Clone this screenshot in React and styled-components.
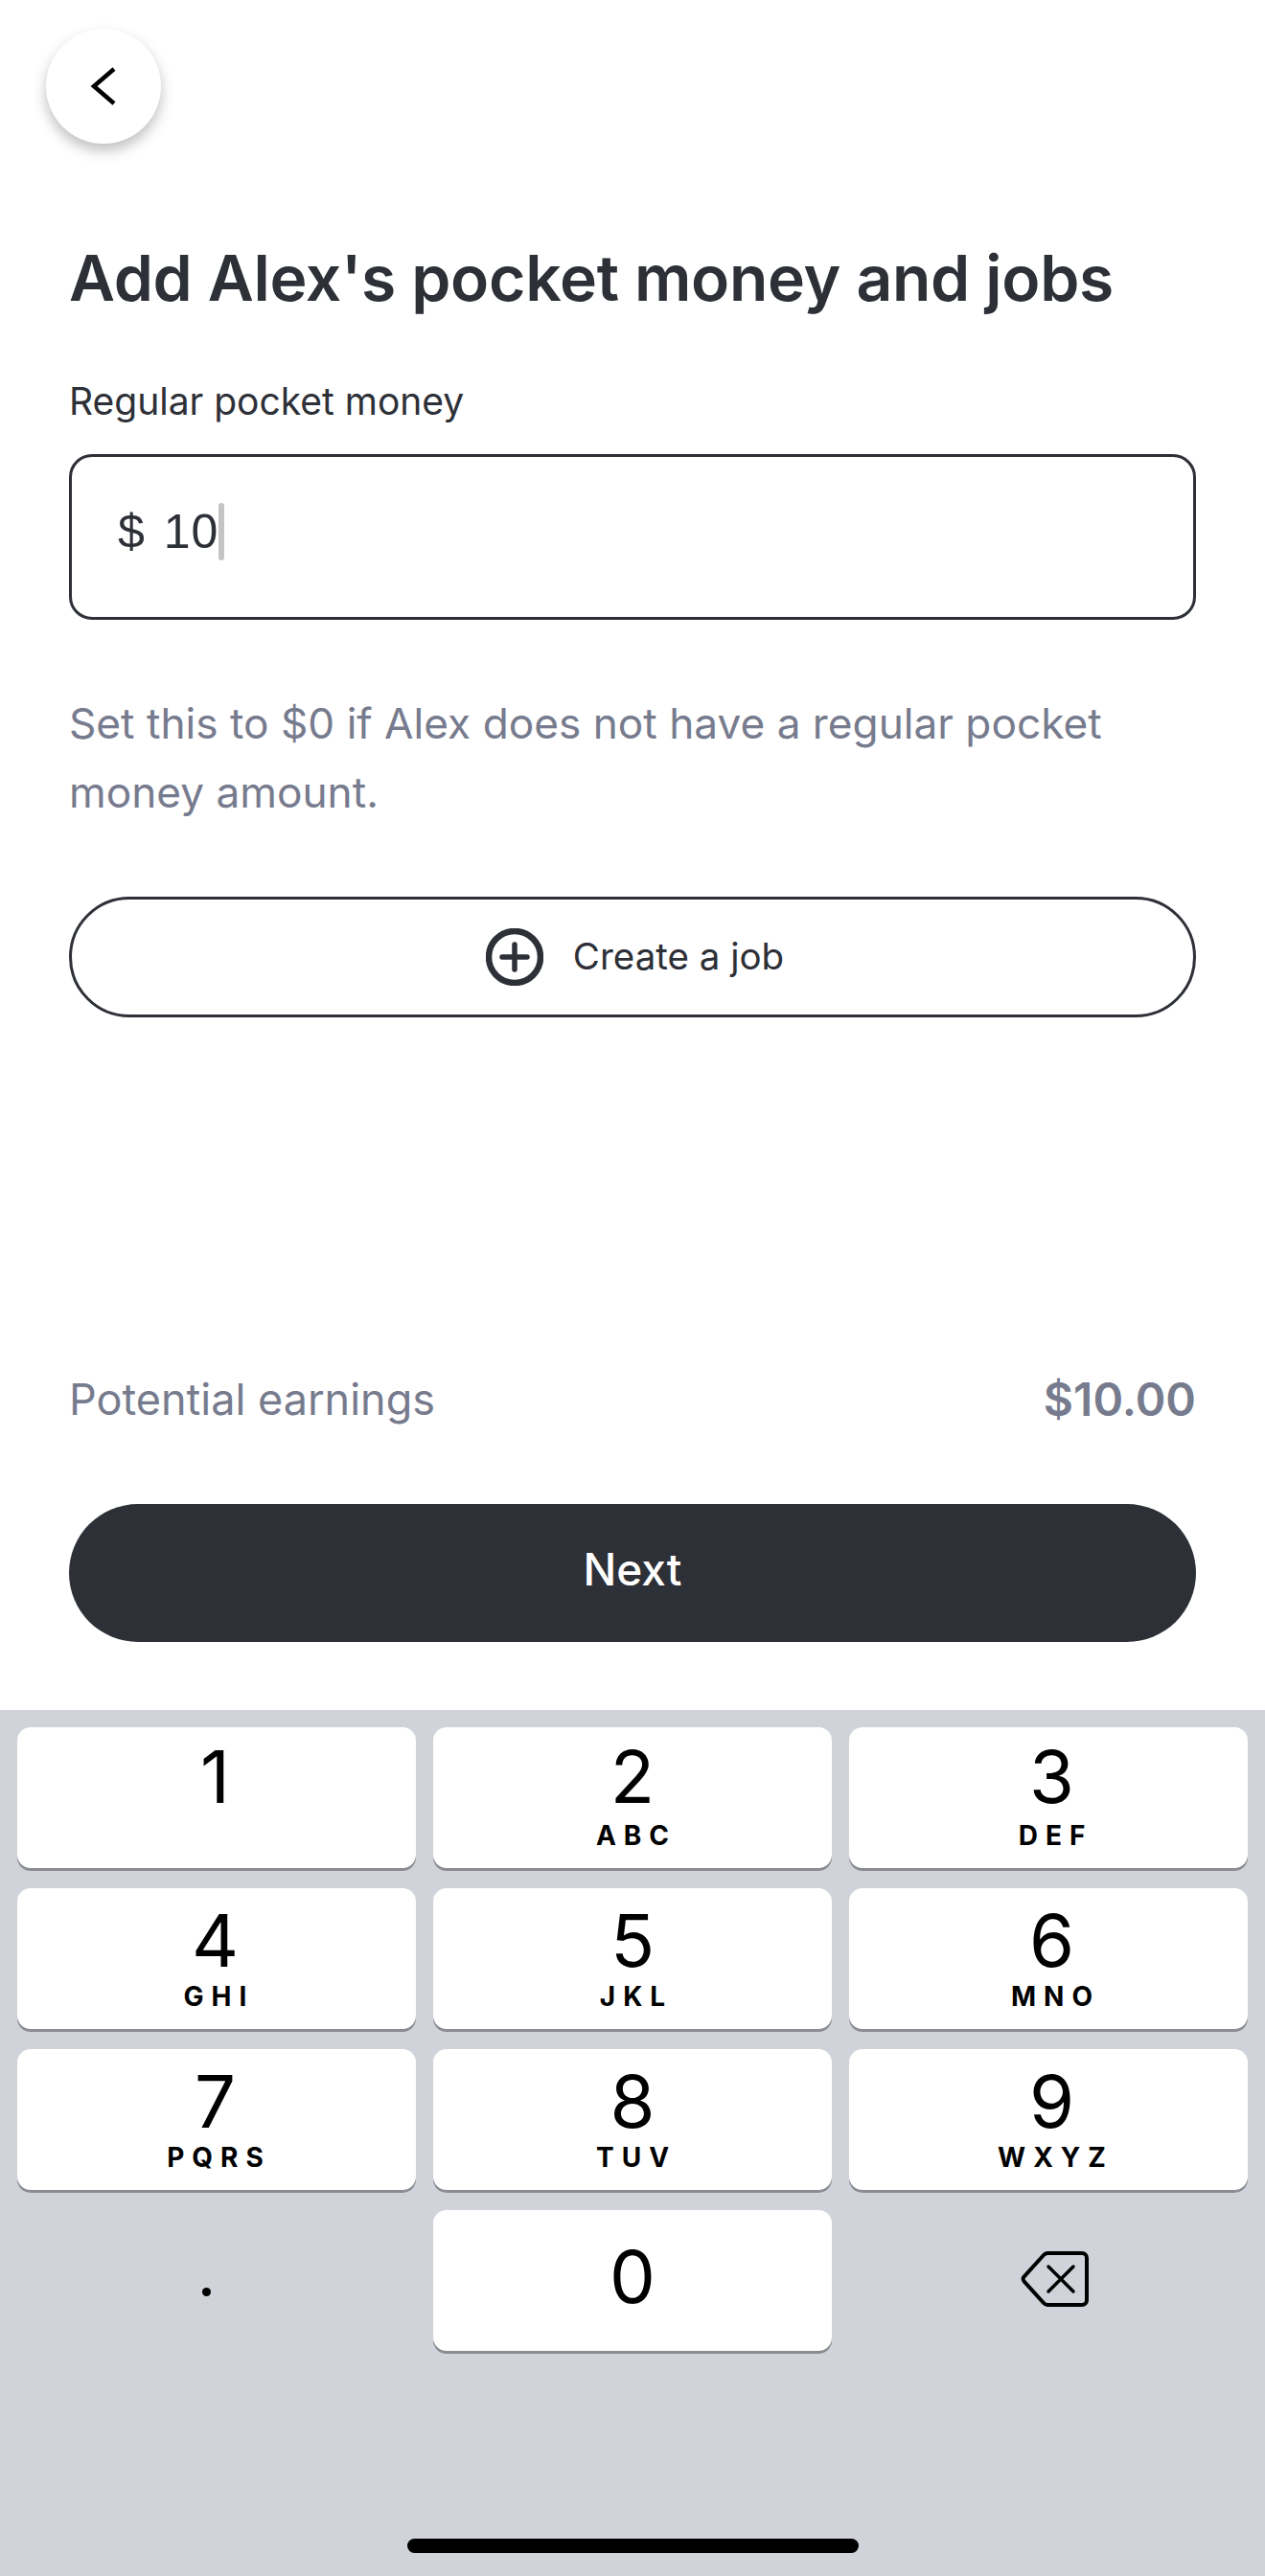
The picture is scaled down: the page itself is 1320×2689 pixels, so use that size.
import React from "react";
import styled, { createGlobalStyle } from "styled-components";

const Global = createGlobalStyle`
  html, body { margin: 0; padding: 0; background: #fff; }
  * { box-sizing: border-box; }
  body { font-family: Inter, "Liberation Sans", sans-serif; }
`;
const Page = styled.div`
  width: 1320px; height: 2689px; display: flex; flex-direction: column; overflow: hidden;
  background: #fff; color: #2d3037;
`;
const Content = styled.main`
  height: 1785px; padding: 30px 72px 0; display: flex; flex-direction: column;
`;
const BackButton = styled.button`
  width: 120px; height: 120px; margin-left: -24px; border: 0; border-radius: 50%; background: #fff;
  box-shadow: 0 7px 14px rgba(0,0,0,.25); display: flex; align-items: center; justify-content: center; padding: 0;
`;
const Title = styled.h1`
  margin: 98px 0 0; font-size: 66px; line-height: 84px; font-weight: 600; letter-spacing: -0.3px; white-space: nowrap;
`;
const Label = styled.label`
  margin-top: 63px; font-size: 39px; line-height: 48px; font-weight: 400;
`;
const Field = styled.div`
  margin-top: 31px; height: 173px; border: 3px solid #2d3037; border-radius: 24px; padding: 0 0 12px 48px;
  display: flex; align-items: center; font-size: 50px;
`;
const Currency = styled.span` margin-right: 20px; font-family: "Liberation Sans", sans-serif; `;
const Value = styled.span` font-family: "Liberation Sans", sans-serif; letter-spacing: 1px; `;
const Caret = styled.span`
  width: 6px; height: 60px; background: #c4c4c6; border-radius: 3px;
`;
const Help = styled.p`
  margin: 72px 0 0; font-size: 44.2px; line-height: 72px; color: #777b8e;
`;
const OutlineButton = styled.button`
  margin-top: 73px; height: 126px; border: 3px solid #2d3037; border-radius: 63px; background: #fff; color: #2d3037;
  display: flex; align-items: center; justify-content: center; gap: 31px; font: 400 38.5px/48px Inter, sans-serif; padding: 0 0 0 5px;
`;
const ButtonText = styled.span` margin-bottom: 3px; `;
const Earnings = styled.div`
  margin-top: auto; display: flex; justify-content: space-between; align-items: center; font-size: 45px; line-height: 56px; color: #777b8e;
`;
const Amount = styled.span` font-size: 48px; font-weight: 600; `;
const Primary = styled.button`
  margin: 81px 0 71px; height: 144px; border: 0; border-radius: 72px; background: #2d3037; color: #fff;
  font: 500 46px/56px Inter, sans-serif; padding: 0 0 8px;
`;
const Keyboard = styled.section`
  flex: 1; background: #d0d3da; padding: 18px 18px 0; position: relative;
`;
const Grid = styled.div`
  display: grid; grid-template-columns: repeat(3, 416px); column-gap: 18px; row-gap: 21px; grid-auto-rows: 147px;
`;
const Key = styled.div`
  background: ${p => p.$flat ? "transparent" : "#fff"};
  border-radius: 14px;
  box-shadow: ${p => p.$flat ? "none" : "0 3px 0 #8a8c92"};
  color: #000; display: flex; flex-direction: column; align-items: center; justify-content: ${p => p.$center ? "center" : "flex-start"};
  padding-left: ${p => p.$inset || 0}px;
  padding-right: ${p => p.$outset || 0}px;
`;
const Digit = styled.span`
  font-size: 76px; line-height: 84px; font-weight: 400; margin-top: ${p => p.$top}px;
`;
const Letters = styled.span`
  font-size: 28px; line-height: 32px; font-weight: 700; letter-spacing: 8px; margin: ${p => p.$gap}px -8px 0 0;
`;
const Dot = styled.span`
  width: 9px; height: 9px; border-radius: 50%; background: #000; margin: 24px 22px 0 0;
`;
const DeleteIcon = styled.svg` margin-bottom: 3px; `;
const HomeBar = styled.div`
  position: absolute; left: 425px; top: 865px; width: 471px; height: 15px; border-radius: 8px; background: #000;
`;

const keys = [["1",""],["2","ABC"],["3","DEF"],["4","GHI"],["5","JKL"],["6","MNO"],["7","PQRS"],["8","TUV"],["9","WXYZ"]];

export default function App() {
  return (
    <Page>
      <Global />
      <Content>
        <BackButton aria-label="Back">
          <svg width="28" height="40" viewBox="0 0 28 40" fill="none"><path d="M25 2 4 20l21 18" stroke="#000" strokeWidth="4.5" /></svg>
        </BackButton>
        <Title>Add Alex's pocket money and jobs</Title>
        <Label>Regular pocket money</Label>
        <Field><Currency>$</Currency><Value>10</Value><Caret /></Field>
        <Help>Set this to $0 if Alex does not have a regular pocket money amount.</Help>
        <OutlineButton>
          <svg width="60" height="60" viewBox="0 0 60 60" fill="none">
            <circle cx="30" cy="30" r="27" stroke="#2d3037" strokeWidth="6.5" />
            <path d="M30 17v26M17 30h26" stroke="#2d3037" strokeWidth="5.5" strokeLinecap="round" />
          </svg>
          <ButtonText>Create a job</ButtonText>
        </OutlineButton>
        <Earnings><span>Potential earnings</span><Amount>$10.00</Amount></Earnings>
        <Primary>Next</Primary>
      </Content>
      <Keyboard>
        <Grid>
          {keys.map(([d, l], i) => (
            <Key key={d} $inset={i % 3 === 2 ? 7 : 0} $outset={i % 3 === 0 ? 3 : 0}>
              <Digit $top={i < 3 ? 9 : 12}>{d}</Digit>
              {l && <Letters $gap={i < 3 ? 4 : 1}>{l}</Letters>}
            </Key>
          ))}
          <Key $flat $center><Dot /></Key>
          <Key><Digit $top={27}>0</Digit></Key>
          <Key $flat $center $inset={14}>
            <DeleteIcon width="72" height="60" viewBox="0 0 72 60" fill="none" aria-label="Delete">
              <path d="M28 3h36a5 5 0 0 1 5 5v44a5 5 0 0 1-5 5H28a6 6 0 0 1-4-2L4 33a4 4 0 0 1 0-6L24 5a6 6 0 0 1 4-2Z" stroke="#000" strokeWidth="4" />
              <path d="M29 17l26 26M55 17 29 43" stroke="#000" strokeWidth="3.5" strokeLinecap="round" />
            </DeleteIcon>
          </Key>
        </Grid>
        <HomeBar />
      </Keyboard>
    </Page>
  );
}
